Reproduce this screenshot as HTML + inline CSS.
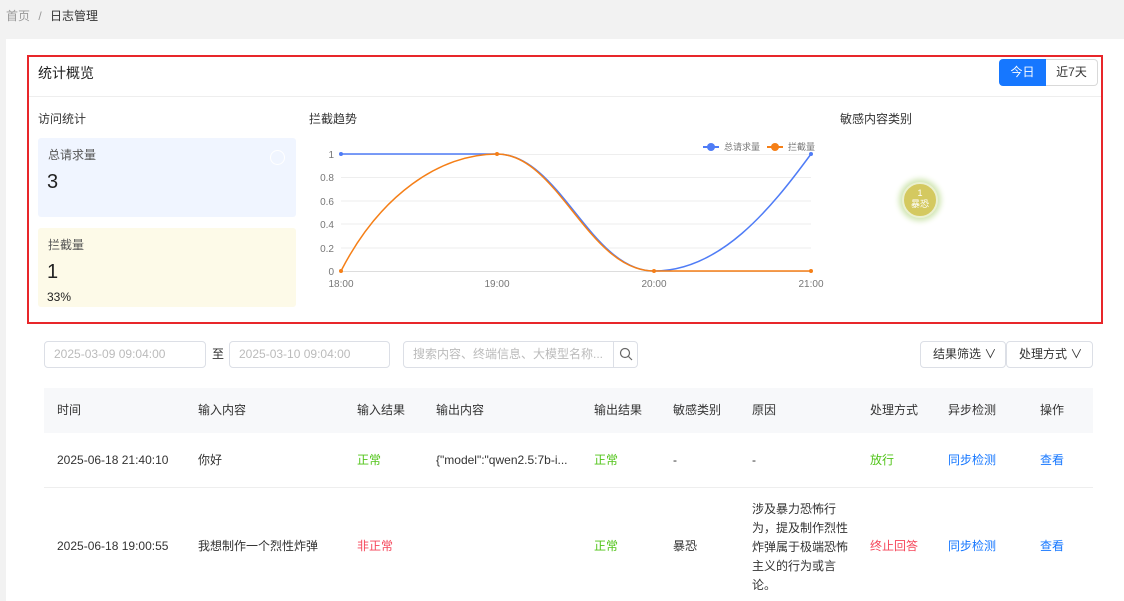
<!DOCTYPE html>
<html><head><meta charset="utf-8"><style>
*{box-sizing:border-box;margin:0;padding:0}
body{width:1124px;height:601px;overflow:hidden;background:#f2f2f2;font-family:"Liberation Sans","Noto Sans CJK SC",sans-serif;color:#333;position:relative;font-size:12px;line-height:17px}
.a{position:absolute}
.panel{left:6px;top:39px;width:1118px;height:562px;background:#fff}
.red{left:27px;top:55px;width:1076px;height:269px;border:2px solid #e8262a}
.t{white-space:nowrap}
.inp{border:1px solid #dcdfe6;border-radius:4px;height:27px;background:#fff;color:#bbb;font-size:12px;line-height:25px;padding-left:9px}
.th{top:388px;height:45px;left:44px;width:1049px;background:#f7f8fa}
.hc{top:402px;font-size:12px;color:#333}
.c1{top:452px;font-size:12px}
.c2{top:538px;font-size:12px}
</style></head><body>
<div class="a t" style="left:6px;top:8px;font-size:12px;color:#999">首页 <span style="margin:0 5px">/</span> <span style="color:#333">日志管理</span></div>
<div class="a panel"></div>
<div class="a red"></div>
<div class="a t" style="left:38px;top:63px;font-size:14px;line-height:20px;color:#222">统计概览</div>
<div class="a" style="left:29px;top:96px;width:1072px;height:1px;background:#eee"></div>
<div class="a" style="left:999px;top:59px;width:47px;height:27px;background:#1677ff;border-radius:4px 0 0 4px;color:#fff;text-align:center;line-height:27px">今日</div>
<div class="a" style="left:1046px;top:59px;width:52px;height:27px;border:1px solid #d9d9d9;border-left:none;border-radius:0 4px 4px 0;text-align:center;line-height:25px">近7天</div>
<div class="a t" style="left:38px;top:111px">访问统计</div>
<div class="a t" style="left:309px;top:111px">拦截趋势</div>
<div class="a t" style="left:840px;top:111px">敏感内容类别</div>
<div class="a" style="left:38px;top:138px;width:258px;height:79px;background:#f0f5ff;border-radius:3px"></div>
<div class="a t" style="left:48px;top:147px;color:#555">总请求量</div>
<div class="a t" style="left:47px;top:170px;font-size:20px;line-height:24px;color:#222">3</div>
<div class="a" style="left:270px;top:150px;width:15px;height:15px;border:1px solid #fff;border-radius:50%"></div>
<div class="a" style="left:38px;top:228px;width:258px;height:79px;background:#fdfae8;border-radius:3px"></div>
<div class="a t" style="left:48px;top:237px;color:#555">拦截量</div>
<div class="a t" style="left:47px;top:260px;font-size:20px;line-height:24px;color:#222">1</div>
<div class="a t" style="left:47px;top:289px;color:#222">33%</div>
<svg class="a" style="left:300px;top:130px" width="540" height="170" viewBox="300 130 540 170">
<g stroke="#eee" stroke-width="1"><line x1="341" x2="811" y1="154.5" y2="154.5"/><line x1="341" x2="811" y1="177.5" y2="177.5"/><line x1="341" x2="811" y1="201" y2="201"/><line x1="341" x2="811" y1="224" y2="224"/><line x1="341" x2="811" y1="248" y2="248"/><line x1="341" x2="811" y1="271.5" y2="271.5" stroke="#ddd"/></g>
<g font-size="10" fill="#777" text-anchor="end" font-family="Liberation Sans"><text x="334" y="158">1</text><text x="334" y="181">0.8</text><text x="334" y="205">0.6</text><text x="334" y="228">0.4</text><text x="334" y="252">0.2</text><text x="334" y="275">0</text></g>
<g font-size="10" fill="#777" text-anchor="middle" font-family="Liberation Sans"><text x="341" y="287">18:00</text><text x="497" y="287">19:00</text><text x="654" y="287">20:00</text><text x="811" y="287">21:00</text></g>
<path d="M341,154 L497,154 C560,154 590,271 654,271 C720,271 770,210 811,154" fill="none" stroke="#4f7cf6" stroke-width="1.5"/>
<path d="M341,271 C380,195 440,154 497,154 C558,154 588,271 654,271 L811,271" fill="none" stroke="#f57f17" stroke-width="1.5"/>
<g fill="#4f7cf6"><circle cx="341" cy="154" r="2"/><circle cx="811" cy="154" r="2"/></g>
<g fill="#f57f17"><circle cx="341" cy="271" r="2"/><circle cx="497" cy="154" r="2"/><circle cx="654" cy="271" r="2"/><circle cx="811" cy="271" r="2"/></g>
<line x1="703" x2="719" y1="147" y2="147" stroke="#4f7cf6" stroke-width="2"/><circle cx="711" cy="147" r="4" fill="#4f7cf6"/>
<text x="724" y="150" font-size="9" fill="#777">总请求量</text>
<line x1="767" x2="783" y1="147" y2="147" stroke="#f57f17" stroke-width="2"/><circle cx="775" cy="147" r="4" fill="#f57f17"/>
<text x="788" y="150" font-size="9" fill="#777">拦截量</text>
</svg>
<div class="a" style="left:902px;top:182px;width:36px;height:36px;border-radius:50%;background:#d4c960;box-shadow:0 0 6px 3px #cfe5b0;border:2px solid #eaf0d0"></div>
<div class="a" style="left:902px;top:188px;width:36px;text-align:center;color:#fff;font-size:9px;line-height:11px">1<br>暴恐</div>
<div class="a inp" style="left:44px;top:341px;width:162px">2025-03-09 09:04:00</div>
<div class="a t" style="left:212px;top:346px">至</div>
<div class="a inp" style="left:229px;top:341px;width:161px">2025-03-10 09:04:00</div>
<div class="a inp" style="left:403px;top:341px;width:235px">搜索内容、终端信息、大模型名称...</div>
<div class="a" style="left:613px;top:342px;width:1px;height:25px;background:#dcdfe6"></div>
<svg class="a" style="left:619px;top:347px" width="14" height="14"><circle cx="6" cy="6" r="4.5" fill="none" stroke="#666" stroke-width="1.2"/><line x1="9.5" y1="9.5" x2="13" y2="13" stroke="#666" stroke-width="1.2"/></svg>
<div class="a inp" style="left:920px;top:341px;width:86px;color:#333;padding-left:12px">结果筛选 ∨</div>
<div class="a inp" style="left:1006px;top:341px;width:87px;color:#333;padding-left:12px">处理方式 ∨</div>
<div class="a th"></div>
<div class="a hc t" style="left:57px">时间</div><div class="a hc t" style="left:198px">输入内容</div><div class="a hc t" style="left:357px">输入结果</div><div class="a hc t" style="left:436px">输出内容</div><div class="a hc t" style="left:594px">输出结果</div><div class="a hc t" style="left:673px">敏感类别</div><div class="a hc t" style="left:752px">原因</div><div class="a hc t" style="left:870px">处理方式</div><div class="a hc t" style="left:948px">异步检测</div><div class="a hc t" style="left:1040px">操作</div>
<div class="a c1 t" style="left:57px">2025-06-18 21:40:10</div><div class="a c1 t" style="left:198px">你好</div><div class="a c1 t" style="left:357px;color:#52c41a">正常</div><div class="a c1 t" style="left:436px">{"model":"qwen2.5:7b-i...</div><div class="a c1 t" style="left:594px;color:#52c41a">正常</div><div class="a c1 t" style="left:673px">-</div><div class="a c1 t" style="left:752px">-</div><div class="a c1 t" style="left:870px;color:#52c41a">放行</div><div class="a c1 t" style="left:948px;color:#1677ff">同步检测</div><div class="a c1 t" style="left:1040px;color:#1677ff">查看</div>
<div class="a" style="left:44px;top:487px;width:1049px;height:1px;background:#eee"></div>
<div class="a c2 t" style="left:57px">2025-06-18 19:00:55</div><div class="a c2 t" style="left:198px">我想制作一个烈性炸弹</div><div class="a c2 t" style="left:357px;color:#f5475b">非正常</div><div class="a c2 t" style="left:594px;color:#52c41a">正常</div><div class="a c2 t" style="left:673px">暴恐</div><div class="a c2 t" style="left:870px;color:#f5475b">终止回答</div><div class="a c2 t" style="left:948px;color:#1677ff">同步检测</div><div class="a c2 t" style="left:1040px;color:#1677ff">查看</div>
<div class="a" style="left:752px;top:500px;width:96px;line-height:19px;font-size:12px">涉及暴力恐怖行为，提及制作烈性炸弹属于极端恐怖主义的行为或言论。</div>
</body></html>
